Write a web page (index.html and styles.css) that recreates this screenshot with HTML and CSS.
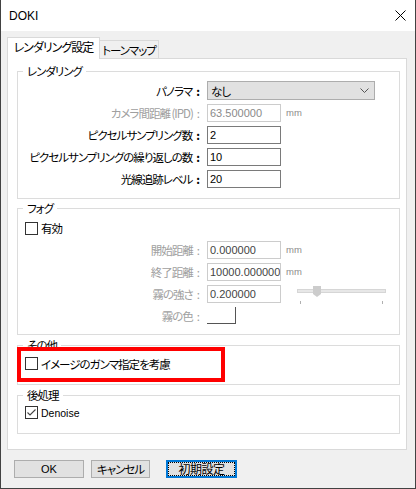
FILE: index.html
```html
<!DOCTYPE html>
<html lang="ja">
<head>
<meta charset="utf-8">
<title>DOKI</title>
<link rel="stylesheet" href="styles.css">
</head>
<body>
<div class="window">
  <div class="titlebar">
    <span class="title">DOKI</span>
    <svg class="close" width="11" height="11" viewBox="0 0 11 11"><path d="M0.5 0.5 L10.5 10.5 M10.5 0.5 L0.5 10.5" stroke="#000" stroke-width="1" fill="none"/></svg>
  </div>
  <div class="client">
    <div class="tabs">
      <div class="tab active">レンダリング設定</div>
      <div class="tab inactive">トーンマップ</div>
    </div>
    <div class="panel">
      <fieldset class="group g-render">
        <legend>レンダリング</legend>
        <div class="rows">
          <div class="row sel">
            <span class="lbl">パノラマ<span class="colon">:</span></span>
            <div class="select"><span>なし</span><svg class="chev" width="9" height="5" viewBox="0 0 9 5"><path d="M0.5 0.5 L4.5 4.5 L8.5 0.5" stroke="#555" fill="none"/></svg></div>
          </div>
          <div class="row">
            <span class="lbl dis">カメラ間距離 (IPD)<span class="colon">:</span></span>
            <div class="field dis">63.500000</div>
            <span class="unit">mm</span>
          </div>
          <div class="row">
            <span class="lbl">ピクセルサンプリング数<span class="colon">:</span></span>
            <div class="field">2</div>
          </div>
          <div class="row">
            <span class="lbl">ピクセルサンプリングの繰り返しの数<span class="colon">:</span></span>
            <div class="field">10</div>
          </div>
          <div class="row">
            <span class="lbl">光線追跡レベル<span class="colon">:</span></span>
            <div class="field">20</div>
          </div>
        </div>
      </fieldset>

      <fieldset class="group g-fog">
        <legend>フォグ</legend>
        <div class="check"><span class="box"></span><span>有効</span></div>
        <div class="rows fog-rows">
          <div class="row">
            <span class="lbl dis">開始距離<span class="colon">:</span></span>
            <div class="field ro">0.000000</div>
            <span class="unit">mm</span>
          </div>
          <div class="row">
            <span class="lbl dis">終了距離<span class="colon">:</span></span>
            <div class="field ro">10000.000000</div>
            <span class="unit">mm</span>
          </div>
          <div class="row">
            <span class="lbl dis">霧の強さ<span class="colon">:</span></span>
            <div class="field ro">0.200000</div>
            <div class="slider">
              <div class="track"></div>
              <svg class="thumb" width="8" height="11" viewBox="0 0 8 11"><polygon points="0,0 8,0 8,8 4,11 0,8" fill="#cccccc"/></svg>
              <div class="ticks"><span class="tick"></span><span class="tick"></span></div>
            </div>
          </div>
          <div class="row">
            <span class="lbl dis">霧の色<span class="colon">:</span></span>
            <div class="swatch"></div>
          </div>
        </div>
      </fieldset>

      <fieldset class="group g-other">
        <legend>その他</legend>
        <div class="check hl"><span class="box"></span><span>イメージのガンマ指定を考慮</span><div class="redbox"></div></div>
      </fieldset>

      <fieldset class="group g-post">
        <legend>後処理</legend>
        <div class="check"><span class="box"><svg width="11" height="11" viewBox="0 0 11 11"><path d="M1.5 5.5 L4 8 L9.5 2.5" stroke="#444" stroke-width="1.1" fill="none"/></svg></span><span class="latin">Denoise</span></div>
      </fieldset>
    </div>
    <div class="buttons">
      <div class="btn b-ok">OK</div>
      <div class="btn b-cancel">キャンセル</div>
      <div class="btn b-reset"><span class="focus">初期設定</span></div>
    </div>
  </div>
</div>
</body>
</html>
```

FILE: styles.css
```css
* { box-sizing: border-box; }
body {
  margin: 0;
  font-family: "Noto Sans CJK JP", sans-serif;
  font-size: 11.5px;
  line-height: 14px;
  letter-spacing: -1px;
  color: #000;
  font-feature-settings: "palt";
}
.window {
  width: 416px;
  height: 489px;
  border: 1px solid #424242;
  border-top: none;
  background: #f0f0f0;
  display: flex;
  flex-direction: column;
}
.titlebar {
  height: 31px;
  flex: none;
  background: #fff;
  display: flex;
  align-items: center;
  padding: 0 9px 0 8px;
}
.title { font-family: "Liberation Sans", sans-serif; font-size: 12px; letter-spacing: 0; }
.close { margin-left: auto; }
.client { flex: 1; padding: 6px 0 0 6px; }
.tabs { display: flex; align-items: flex-end; height: 21px; }
.tab {
  border: 1px solid #d9d9d9;
  border-bottom: none;
  display: flex;
  align-items: center;
  justify-content: center;
  white-space: nowrap;
}
.tab.active {
  width: 93px;
  height: 22px;
  margin-bottom: -1px;
  padding-bottom: 3px;
  background: #fff;
  position: relative;
  z-index: 1;
  font-size: 12px;
}
.tab.inactive {
  width: 59px;
  height: 18px;
  border-left: none;
  background: #f0f0f0;
}
.panel {
  width: 400px;
  height: 392px;
  border: 1px solid #d9d9d9;
  background: #fff;
  padding: 5px 6px 0 9px;
  display: flex;
  flex-direction: column;
}
.group {
  margin: 0;
  min-width: 0;
  border: 1px solid #dcdcdc;
  padding: 3px 7px 10px 7px;
}
.group legend {
  padding: 0 4px;
  margin-left: -2px;
  line-height: 14px;
}
.g-fog { margin-top: 2px; padding: 5px 7px 9px 7px; }
.g-other { margin-top: 3px; padding: 3px 7px 12px 7px; }
.g-post { margin-top: 3px; padding: 2px 7px 12px 7px; }
.rows { display: flex; flex-direction: column; gap: 4px; }
.fog-rows { margin-top: 5px; }
.row { display: flex; align-items: center; height: 18px; }
.row.sel { height: 19px; }
.lbl { width: 176px; flex: none; text-align: right; margin-right: 6px; white-space: nowrap; }
.colon { margin-left: 4px; margin-right: 1px; font-weight: bold; letter-spacing: 0; }
.lbl .colon { color: #000; }
.lbl.dis .colon { color: #a0a0a0; font-weight: normal; }
.dis { color: #a0a0a0; }
.field {
  width: 74px;
  height: 18px;
  flex: none;
  border: 1px solid #7a7a7a;
  background: #fff;
  font-family: "Liberation Sans", sans-serif;
  font-size: 11px;
  letter-spacing: 0;
  padding-left: 2px;
  display: flex;
  align-items: center;
  white-space: nowrap;
  overflow: hidden;
}
.field.dis { border-color: #cccccc; color: #8a8a8a; }
.field.ro { border-color: #cccccc; color: #444; }
.unit {
  margin-left: 5px;
  font-family: "Liberation Sans", sans-serif;
  font-size: 9.5px;
  letter-spacing: 0;
  color: #8c8c8c;
  align-self: flex-start;
  margin-top: 2px;
}
.select {
  width: 168px;
  height: 19px;
  background: #e1e1e1;
  border: 1px solid #adadad;
  display: flex;
  align-items: center;
  padding: 0 5px 0 3px;
}
.chev { margin-left: auto; }
.slider { position: relative; width: 89px; height: 18px; margin-left: 16px; align-self: flex-start; }
.track { margin-top: 4px; height: 4px; background: #e7e7e7; border: 1px solid #d6d6d6; }
.thumb { position: absolute; left: 16px; top: 1px; }
.ticks { display: flex; justify-content: space-between; padding: 0 3px; margin-top: 8px; }
.tick { width: 1px; height: 3px; background: #b0b0b0; }
.swatch { width: 29px; height: 17px; border-right: 1px solid #555; border-bottom: 1px solid #555; align-self: flex-start; }
.check { display: flex; align-items: center; height: 16px; white-space: nowrap; }
.g-other .check, .g-post .check { height: 17px; }
.box {
  width: 13px;
  height: 13px;
  flex: none;
  border: 1px solid #333;
  background: #fff;
  margin-right: 3px;
  display: flex;
  align-items: center;
  justify-content: center;
}
.latin { font-family: "Liberation Sans", sans-serif; font-size: 10.5px; letter-spacing: 0; }
.hl { position: relative; }
.redbox {
  position: absolute;
  left: -8px;
  top: -8px;
  width: 208px;
  height: 35px;
  border: 4px solid #ff0000;
}
.buttons { display: flex; margin: 10px 0 0 7px; }
.btn {
  height: 18px;
  background: #e1e1e1;
  border: 1px solid #adadad;
  display: flex;
  align-items: center;
  justify-content: center;
  white-space: nowrap;
}
.b-ok { width: 70px; margin-right: 7px; font-family: "Liberation Sans", sans-serif; font-size: 11px; letter-spacing: 0; }
.b-cancel { width: 59px; margin-right: 16px; }
.b-reset { width: 71px; border: 2px solid #0078d7; font-size: 12px; letter-spacing: -0.5px; }
.focus {
  width: 100%;
  height: 100%;
  border: 1px dotted #000;
  display: flex;
  align-items: center;
  justify-content: center;
}
```
